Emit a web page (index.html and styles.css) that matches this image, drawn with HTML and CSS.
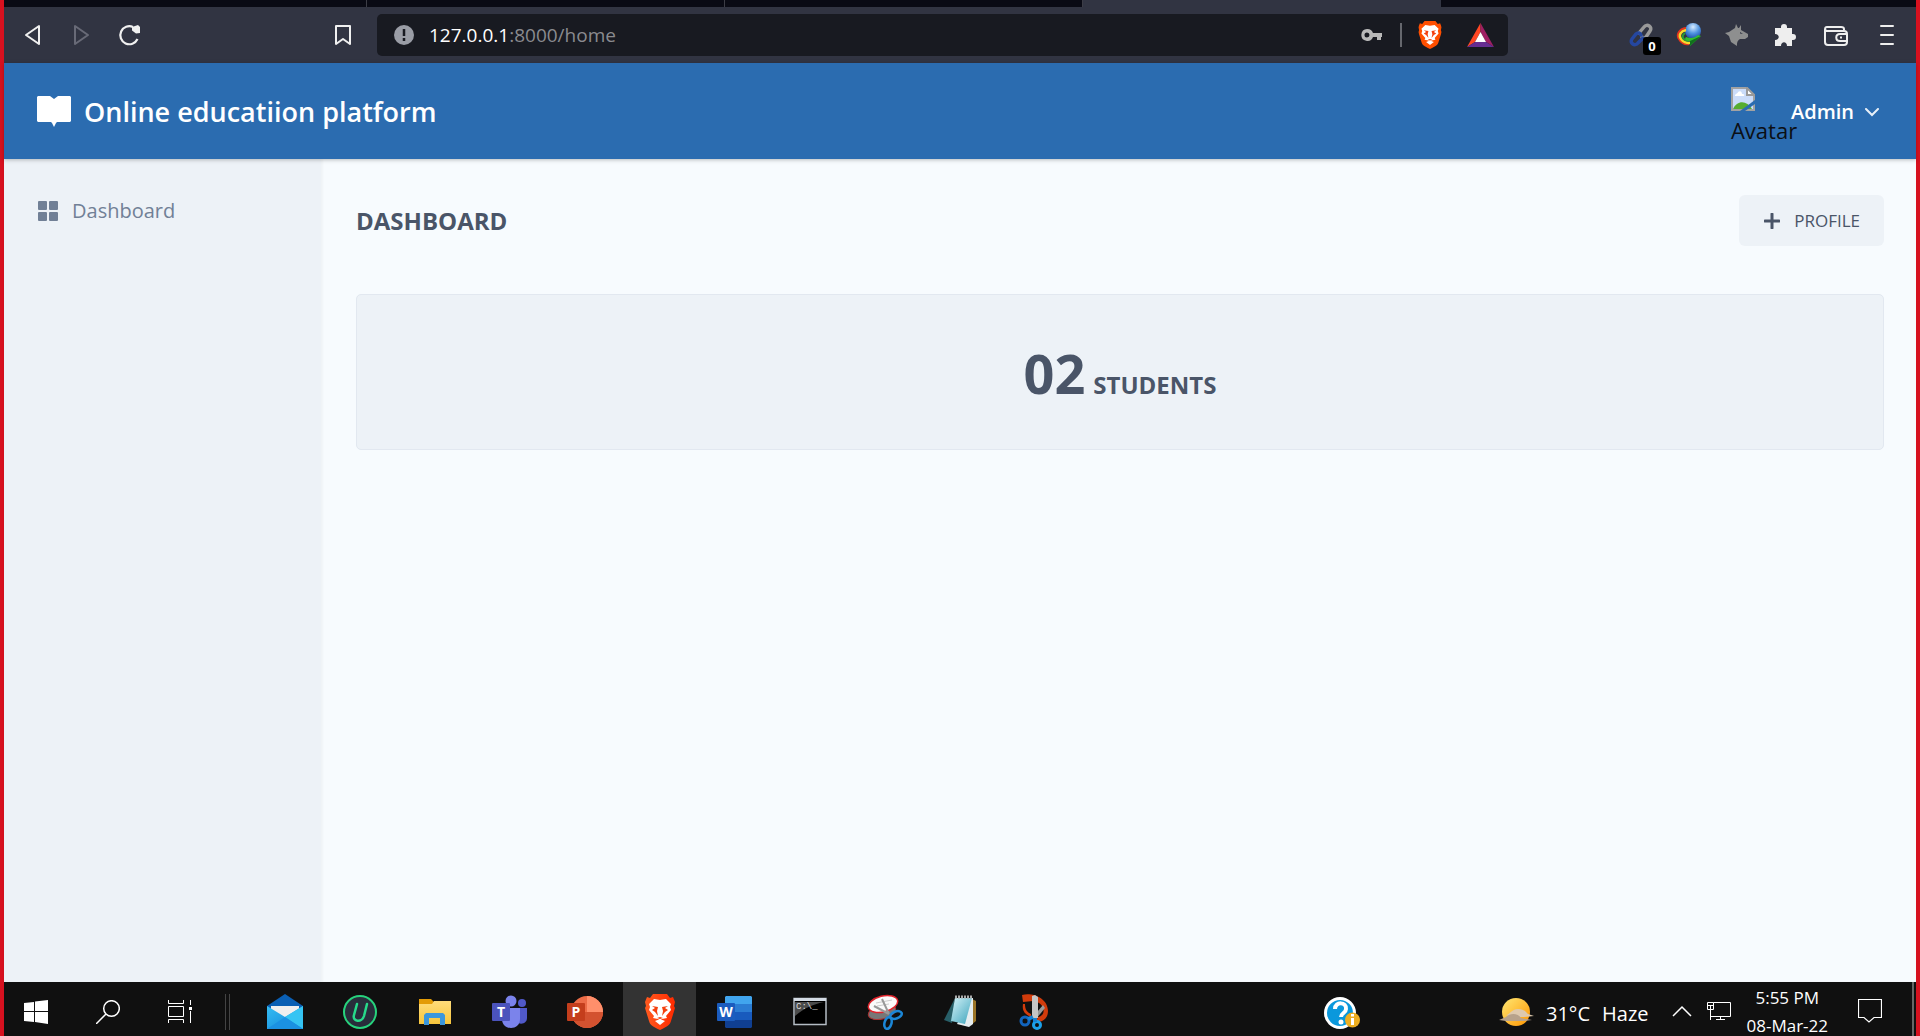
FILE: index.html
```html
<!DOCTYPE html>
<html lang="en">
<head>
<meta charset="utf-8">
<title>Online educatiion platform</title>
<meta name="viewport" content="width=device-width, initial-scale=1">
<link rel="stylesheet" href="styles.css">
</head>
<body>
<svg class="defs" aria-hidden="true">
  <defs>
    <linearGradient id="gBrave" x1="0" x2="1"><stop offset="0" stop-color="#ff5a1f"/><stop offset="1" stop-color="#ff2a00"/></linearGradient>
    <linearGradient id="gMail" x1="0" y1="0" x2="1" y2="1"><stop offset="0" stop-color="#35bdf3"/><stop offset="1" stop-color="#1184d8"/></linearGradient>
    <linearGradient id="gSun" x1="0" y1="0" x2="1" y2="1"><stop offset="0" stop-color="#ffe873"/><stop offset="1" stop-color="#ff9500"/></linearGradient>
    <linearGradient id="gFolder" x1="0" y1="0" x2="0" y2="1"><stop offset="0" stop-color="#ffdc7a"/><stop offset="1" stop-color="#f8c63c"/></linearGradient>
    <linearGradient id="gPad" x1="0" y1="0" x2="1" y2="1"><stop offset="0" stop-color="#d5f2f8"/><stop offset="1" stop-color="#3aa3bb"/></linearGradient>
    <radialGradient id="gGlobe" cx=".5" cy=".25" r=".8"><stop offset="0" stop-color="#d8ecff"/><stop offset=".5" stop-color="#4f94e0"/><stop offset="1" stop-color="#173f9c"/></radialGradient>
    <symbol id="lion" viewBox="0 0 30 36">
      <path d="M8 0h14l3 4 3-1 2 5-1 4 1 2-4 13c-1 4-3 5-11 9-8-4-10-5-11-9L0 14l1-2-1-4 2-5 3 1z"/>
      <path fill="#fff" d="M15 6l6-1 5 5-1 3 1 3-5 6 1 2-5 1-2 2-2-2-5-1 1-2-5-6 1-3-1-3 5-5zM10 27l5-2 5 2-5 4z"/>
      <path fill="#f4400f" d="M7 12l6 1-1 4 1 5-3-4-3-2 3-2zM23 12l-6 1 1 4-1 5 3-4 3-2-3-2zM12 24l3-1 3 1-3 1z"/>
    </symbol>
  </defs>
</svg>
<div class="screen">
  <div class="tabs"><span class="tab"></span><span class="tab"></span><span class="tab"></span><span class="tab tab-active"></span></div>

  <div class="toolbar">
    <div class="nav">
      <button class="icon-btn" aria-label="Back"><svg width="24" height="24" viewBox="0 0 24 24"><path d="M18 3v18L5 12z" fill="none" stroke="#f0f0f0" stroke-width="2" stroke-linejoin="round"/></svg></button>
      <button class="icon-btn" aria-label="Forward"><svg width="24" height="24" viewBox="0 0 24 24"><path d="M6 3v18l13-9z" fill="none" stroke="#686a77" stroke-width="2" stroke-linejoin="round"/></svg></button>
      <button class="icon-btn" aria-label="Reload"><svg width="24" height="24" viewBox="0 0 24 24"><path d="M16 4a9 9 0 1 0 4.500 12" fill="none" stroke="#f0f0f0" stroke-width="2.200"/><path d="M15 4l6-2 2 2v6l-4 .500-4-3z" fill="#f0f0f0"/></svg></button>
    </div>
    <button class="icon-btn" aria-label="Bookmark"><svg width="24" height="24" viewBox="0 0 24 24"><path d="M5 3h14v18l-7-5-7 5z" fill="none" stroke="#f0f0f0" stroke-width="2" stroke-linejoin="round"/></svg></button>
    <div class="address">
      <svg width="20" height="20" viewBox="0 0 20 20"><circle cx="10" cy="10" r="10" fill="#9a9da6"/><path d="M10 4v7M10 13v3" stroke="#181a21" stroke-width="2.500"/></svg>
      <span class="url">127.0.0.1<span class="url-dim">:8000/home</span></span>
      <svg width="22" height="14" viewBox="0 0 22 14"><path fill="#b9b9b9" fill-rule="evenodd" d="M6 1a6 6 0 0 1 6 4h9v4h-1v3h-4V9h-4A6 6 0 1 1 6 1zm0 3.500a2.500 2.500 0 1 0 0 5 2.500 2.500 0 0 0 0-5z"/></svg>
      <span class="address-rule"></span>
      <svg width="24" height="28" viewBox="0 0 30 36" fill="#ff4f00"><use href="#lion"/></svg>
      <svg class="bat" width="27" height="24" viewBox="0 0 27 24"><path d="M13.500 0L0 24l8-5 5.500-10z" fill="#ff4724"/><path d="M13.500 0L27 24l-8-5-5.500-10z" fill="#9e1f63"/><path d="M0 24h27l-8-5H8z" fill="#662d91"/><path d="M13.500 9L19 19H8z" fill="#fff"/></svg>
    </div>
    <div class="extensions">
      <button class="icon-btn ext-link" aria-label="Links"><svg width="24" height="24" viewBox="0 0 24 24" fill="none" stroke-width="3.500" stroke-linecap="round"><path d="M10 10l5-6c3-4 9 0 6 4l-4 6c-1 1-3 1-4 0" stroke="#999"/><path d="M14 15l-5 5c-3 4-9 0-6-4l4-5c2-2 4-1 5 1" stroke="#2547a0"/></svg><span class="badge">0</span></button>
      <button class="icon-btn" aria-label="Download manager"><svg width="26" height="24" viewBox="0 0 26 24"><circle cx="17" cy="8" r="8" fill="url(#gGlobe)"/><path d="M10 5C3 6 0 12 3 16c2 4 6 6 10 5" fill="none" stroke="#e6351d" stroke-width="2"/><path d="M10 7c-5 1-8 5-5 9s6 4 9 4" fill="none" stroke="#f8d92c" stroke-width="2.500"/><path d="M9 10c-4 3-3 7 4 8" fill="none" stroke="#2a9c35" stroke-width="2"/><path d="M10 14c5 2 9 1 12-2l3 1-11 10v-5c-4 0-6-2-4-4z" fill="#32bd30"/><path d="M14 18l11-5-11 10z" fill="#11701d"/></svg></button>
      <button class="icon-btn" aria-label="Wolf extension"><svg width="24" height="24" viewBox="0 0 24 24"><path fill="#8e8f8f" d="M10 5l1-4 2 4h1l2-3v5l7 4v3l-3 2h-5c-3 2-3 4-3 7l-6-4-2-6-4-3 4-1z"/><path fill="#313442" d="M15 9l3 2-3-.500z"/></svg></button>
      <button class="icon-btn" aria-label="Extensions"><svg width="24" height="24" viewBox="0 0 24 24"><path fill="#eee" d="M2 5h6V4a3 3 0 0 1 6 0v1h5v6h1a3 3 0 0 1 0 6h-1v6h-5c0-5-6-5-6 0H2v-6c5 0 5-6 0-6z"/></svg></button>
      <button class="icon-btn icon-btn-wide" aria-label="Wallet"><svg width="26" height="24" viewBox="0 0 26 24" fill="none" stroke="#eee" stroke-width="2"><path d="M21 7V6c0-1-1-2-3-2H4C1 4 2 8 4 8h17c2 0 3 1 3 3v8c0 2-1 3-3 3H5c-2 0-3-1-3-3V6M24 11h-7c-5 0-5 7 0 7h7M17 14.500h2"/></svg></button>
      <button class="icon-btn" aria-label="Menu"><svg width="24" height="24" viewBox="0 0 24 24"><path d="M6 3h12M6 12h12M6 21h12" stroke="#eee" stroke-width="2" stroke-linecap="round"/></svg></button>
    </div>
  </div>

  <header class="header">
    <a class="brand" href="#"><svg width="34" height="32" viewBox="0 0 34 32"><path fill="#fff" d="M1 1h12l4 3 4-3h12l1 1v24l-1 1H20l-1 1-2 4-2-4-1-1H1l-1-1V2z"/></svg><span>Online educatiion platform</span></a>
    <button class="account">
      <span class="avatar"><svg width="24" height="24" viewBox="0 0 24 24"><path d="M1 1h15l7 7v15H1z" fill="#cbdcf9" stroke="#a2a2a2" stroke-width="2"/><path d="M2 22c4-9 14-9 19 0z" fill="#57ad2f"/><path d="M4 9c0-3 3-2 3-4 3-2 4 1 4 2 3 0 3 2 1 2z" fill="#fff"/><path d="M16 1v7h7z" fill="#fff" stroke="#999" stroke-width="2"/><path d="M24 13v4l-10 7H9z" fill="#2b6cb0"/></svg><span>Avatar</span></span>
      <span class="account-name">Admin</span>
      <svg width="14" height="9" viewBox="0 0 14 9"><path d="M1 1l6 6 6-6" fill="none" stroke="#e8f0f8" stroke-width="2" stroke-linecap="round"/></svg>
    </button>
  </header>

  <div class="body">
    <nav class="sidebar">
      <a class="side-link" href="#"><svg width="20" height="20" viewBox="0 0 20 20" fill="#718096"><rect width="9" height="9" rx="1"/><rect x="11" width="9" height="9" rx="1"/><rect y="11" width="9" height="9" rx="1"/><rect x="11" y="11" width="9" height="9" rx="1"/></svg>Dashboard</a>
    </nav>
    <main class="content">
      <div class="content-head">
        <h1>DASHBOARD</h1>
        <a class="profile" href="#"><svg width="16" height="16" viewBox="0 0 16 16"><path d="M8 1v14M1 8h14" stroke="#4a5568" stroke-width="3" stroke-linecap="round"/></svg>PROFILE</a>
      </div>
      <section class="stat"><span class="stat-value">02</span><span class="stat-label">STUDENTS</span></section>
    </main>
  </div>

  <footer class="taskbar">
    <div class="system">
      <button class="sys-btn" aria-label="Start"><svg width="24" height="24" viewBox="0 0 24 24"><path fill="#fff" d="M0 3l10-1v9H0zM11 1.500L24 0v11H11zM0 12h10v10L0 21zM11 12h13v12l-13-2z"/></svg></button>
      <button class="sys-btn" aria-label="Search"><svg width="24" height="24" viewBox="0 0 24 24" fill="none" stroke="#fff" stroke-width="1.500"><circle cx="15.500" cy="8.500" r="7.800"/><path d="M10 14L0 24"/></svg></button>
      <button class="sys-btn" aria-label="Task view"><svg width="24" height="24" viewBox="0 0 24 24" fill="none" stroke="#fff"><path d="M.500 0v3.500h15V0M.500 6.500h15v10H.500zM.500 23v-3.500h15V23M22.500 0v5M22.500 11v12"/><path d="M21 7h3v3h-3z" fill="#fff" stroke="none"/></svg></button>
    </div>
    <span class="divider"></span>
    <div class="apps">
      <button class="app" aria-label="Mail"><svg width="36" height="36" viewBox="0 0 36 36"><path d="M0 12L18 0l18 12v8H0z" fill="#0a5fb4"/><path d="M4 12h28v12H4z" fill="#f0efef"/><path d="M0 12l18 11 18-11v23H0z" fill="url(#gMail)"/><path d="M36 12v23L18 23z" fill="#35c4f3"/><path d="M0 35l18-12 18 12z" fill="#1b91e2"/></svg></button>
      <button class="app" aria-label="Uninstaller"><svg width="36" height="36" viewBox="0 0 36 36"><circle cx="18" cy="18" r="16" fill="#282d3b" stroke="#27d27c" stroke-width="2"/><path d="M15 10l-3 11c-2 7 8 8 10 1l3-12" fill="none" stroke="#27d98a" stroke-width="2.500" stroke-linecap="round"/></svg></button>
      <button class="app" aria-label="Files"><svg width="36" height="36" viewBox="0 0 36 36"><path d="M2 5h12l3 3h17v8H2z" fill="#e39b06"/><path d="M2 10h13l2-3h17v23H2z" fill="url(#gFolder)"/><path d="M7 31V21l2-2h17l2 2v10h-5v-7H12v7z" fill="#3c97dc"/></svg></button>
      <button class="app" aria-label="Teams"><svg width="36" height="36" viewBox="0 0 36 36"><circle cx="30" cy="9" r="4" fill="#5059c9"/><path d="M25 14h10v10c0 4-4 7-9 5z" fill="#5059c9"/><circle cx="19" cy="7" r="5.500" fill="#7b83eb"/><path d="M10 14h18v11c0 12-18 12-18 0z" fill="#7b83eb"/><rect y="9" width="18" height="18" rx="1" fill="#4b53bc"/><text x="9" y="23" text-anchor="middle" class="glyph">T</text></svg></button>
      <button class="app" aria-label="PowerPoint"><svg width="36" height="36" viewBox="0 0 36 36"><circle cx="20" cy="18" r="16" fill="#ed6c47"/><path d="M20 2a16 16 0 0 1 16 16H20z" fill="#ff8f6b"/><path d="M4 18h32a16 16 0 0 1-32 0z" fill="#d35230"/><rect y="9" width="18" height="18" rx="1" fill="#c43e1c"/><text x="9" y="23" text-anchor="middle" class="glyph">P</text></svg></button>
      <button class="app app-active" aria-label="Brave"><svg width="30" height="36" viewBox="0 0 30 36" fill="url(#gBrave)"><use href="#lion"/></svg></button>
      <button class="app" aria-label="Word"><svg width="36" height="36" viewBox="0 0 36 36"><path d="M9 2h25l1 1v7H8V3z" fill="#41a5ee"/><path d="M8 10h27v8H8z" fill="#2b7cd3"/><path d="M8 18h27v8H8z" fill="#185abd"/><path d="M8 26h27v7l-1 1H9l-1-1z" fill="#103f91"/><rect y="9" width="18" height="18" rx="1" fill="#1b5cbe"/><text x="9" y="23" text-anchor="middle" class="glyph">W</text></svg></button>
      <button class="app" aria-label="Command prompt"><svg width="36" height="36" viewBox="0 0 36 36"><rect x="2" y="4.500" width="32" height="26" fill="#000" stroke="#b4bcc4" stroke-width="1.500"/><path d="M2 4h32v3H2z" fill="#d4dbe4"/><path d="M3 8h29C22 10 12 14 3 22z" fill="#4b4b4b"/><text x="4" y="15" class="prompt">C:\_</text></svg></button>
      <button class="app" aria-label="Snipping Tool"><svg width="36" height="36" viewBox="0 0 36 36"><ellipse cx="15" cy="18" rx="14" ry="7" fill="#777" stroke="#a33" transform="rotate(-14 15 18)"/><ellipse cx="16" cy="10" rx="15" ry="8" fill="#fafafa" stroke="#e0232b" stroke-width="1.500" transform="rotate(-14 16 10)"/><path d="M9 9l16-3M10 12l12-2" stroke="#ccc"/><path d="M15 5l7 15M7 12l15 8" stroke="#999" stroke-width="2"/><ellipse cx="29" cy="21" rx="6" ry="3.500" fill="none" stroke="#1b86d6" stroke-width="2.500" transform="rotate(-20 29 21)"/><ellipse cx="21" cy="29" rx="3.500" ry="6" fill="none" stroke="#1b86d6" stroke-width="2.500" transform="rotate(15 21 29)"/></svg></button>
      <button class="app" aria-label="Notepad"><svg width="36" height="36" viewBox="0 0 36 36"><path d="M30 5l4 2v20l-5 4z" fill="#9a7427"/><path d="M28 4h3v26l-4 3-12-3z" fill="#e5edf0"/><path d="M13 4L2 26l8 3z" fill="#285f68"/><path d="M13 4h17l-7 26-14-3z" fill="url(#gPad)"/><path d="M13 3h18" stroke="#aaa" stroke-width="3" stroke-dasharray="2 1"/></svg></button>
      <button class="app" aria-label="Snip and Sketch"><svg width="36" height="36" viewBox="0 0 36 36"><path d="M5 1c10-3 26 3 26 16 0 8-6 12-12 10l2-4c9-1 7-15-5-16L6 8zM8 10c0 6 2 8 6 10v3C7 20 5 16 6 10z" fill="#d13b0b"/><path d="M26 11l-11 13 4 1 9-11z" fill="#999"/><path d="M15 2l3-1 3 2v21h-6z" fill="#c5c5c5"/><circle cx="8" cy="27" r="4" fill="none" stroke="#1264bd" stroke-width="3"/><circle cx="20" cy="31" r="3.500" fill="none" stroke="#1ba0e8" stroke-width="3"/><path d="M11 25l5-2M18 24v4" stroke="#1582d5" stroke-width="4"/></svg></button>
    </div>
    <div class="tray">
      <button class="help" aria-label="Help"><svg width="36" height="34" viewBox="0 0 36 34"><circle cx="16" cy="16" r="14.500" fill="#0a98dc" stroke="#fff" stroke-width="3"/><path d="M11 12c0-8 12-7 11 0 0 4-5 4-5 8" fill="none" stroke="#fff" stroke-width="4"/><circle cx="17" cy="25" r="2.500" fill="#fff"/><circle cx="28.500" cy="23" r="7.500" fill="#edae21"/><path d="M28.500 21v7M28.500 17v2.500" stroke="#fff" stroke-width="3"/></svg></button>
      <button class="weather"><svg width="36" height="30" viewBox="0 0 36 30"><circle cx="18" cy="15" r="14" fill="url(#gSun)"/><path d="M8 18c4 0 5-6 12-6 6 0 8 3 10 5l6 2-10 1H14z" fill="#dec9ad"/><path d="M1 23l7-3c4-4 12-4 15 1l11 2-8 1H8z" fill="#b7a28b"/></svg><span class="weather-text">31°C</span><span class="weather-text">Haze</span></button>
      <button class="sys-icon" aria-label="Show hidden icons"><svg width="20" height="12" viewBox="0 0 20 12"><path d="M1 11l9-9 9 9" fill="none" stroke="#fff" stroke-width="1.500"/></svg></button>
      <button class="sys-icon" aria-label="Network"><svg width="26" height="20" viewBox="0 0 26 20" fill="none" stroke="#fff" stroke-width="1"><path d="M7.500 1.500h17v14h-20v-6M14.500 15.500v3M10 18.500h9M1.500 1.500h6v7h-6zM1 4.500h7M4.500 4v15"/></svg></button>
      <div class="clock"><span>5:55 PM</span><span>08-Mar-22</span></div>
      <button class="sys-icon" aria-label="Notifications"><svg width="24" height="24" viewBox="0 0 24 24"><path d="M.500.500h23v18H16l-5 4.500-5-4.500H.500z" fill="none" stroke="#fff" stroke-width="1.200"/></svg></button>
      <span class="show-desktop"></span>
    </div>
  </footer>
</div>
</body>
</html>
```
FILE: styles.css
```css
* { box-sizing: border-box; }
body { margin: 0; font-family: "Open Sans", "Noto Sans", sans-serif; }
button { border: 0; padding: 0; background: none; font: inherit; color: inherit; }
a { color: inherit; text-decoration: none; }
svg { display: block; flex: none; }
.defs { position: absolute; width: 0; height: 0; }
.screen { display: flex; flex-direction: column; min-height: 100vh; border: solid #d7111f; border-width: 0 4px; }

.tabs { display: flex; height: 7px; background: #090a14; }
.tab { width: 358px; border-right: 1px solid #3c3d46; }
.tab:first-child { width: 363px; }
.tab-active { background: #313442; border: 0; }

.toolbar { display: flex; align-items: center; height: 56px; padding: 0 17px; background: #313442; }
.icon-btn { position: relative; display: flex; align-items: center; justify-content: center; width: 24px; height: 24px; }
.icon-btn-wide { width: 30px; }
.nav { display: flex; gap: 24px; margin-right: 190px; }
.nav + .icon-btn { margin-right: 22px; }
.address { display: flex; align-items: center; flex: 1; height: 42px; margin-right: 121px; padding: 0 14px 0 17px; border-radius: 5px; background: #181a21; }
.url { flex: 1; margin-left: 15px; font-size: 19px; line-height: 28px; color: #fff; }
.url-dim { color: #8a8b8f; }
.address-rule { width: 2px; height: 24px; margin: 0 16px 0 17px; background: #66686e; }
.bat { margin-left: 25px; }
.extensions { display: flex; gap: 24px; }
.badge { position: absolute; left: 14px; top: 14px; width: 18px; height: 18px; border-radius: 3px; background: #000; color: #fff; font-size: 13px; font-weight: 700; line-height: 19px; text-align: center; }

.header { position: relative; display: flex; align-items: center; justify-content: space-between; height: 96px; padding: 0 37px 0 33px; background: #2b6cb0; box-shadow: 0 1px 4px rgba(0, 0, 0, .25); }
.brand { display: flex; align-items: center; gap: 13px; color: #fff; font-size: 27px; font-weight: 600; line-height: 36px; }
.brand span { padding-top: 2px; }
.account { display: flex; align-items: center; padding-top: 2px; color: #fff; }
.avatar { display: flex; flex-direction: column; width: 60px; height: 50px; color: #0b0f14; font-size: 22px; line-height: 38px; white-space: nowrap; text-align: left; }
.avatar span { height: 26px; }
.account-name { margin-right: 11px; font-size: 20px; font-weight: 600; line-height: 28px; }

.body { display: flex; flex: 1; background: #f7fafc; }
.sidebar { width: 317px; padding: 38px 34px; background: #edf2f7; box-shadow: 1px 0 3px rgba(0, 0, 0, .12); }
.side-link { display: flex; align-items: center; gap: 14px; color: #718096; font-size: 20px; line-height: 28px; }
.content { flex: 1; padding: 36px 32px 36px 35px; background: #f7fbfe; box-shadow: inset 2px 0 2px rgba(0, 0, 0, .03); }
.content-head { display: flex; align-items: center; justify-content: space-between; margin-bottom: 48px; }
h1 { margin: 0; color: #4a5568; font-size: 24px; font-weight: 700; line-height: 32px; }
.profile { display: flex; align-items: center; gap: 14px; height: 51px; padding: 0 24px 0 25px; border-radius: 6px; background: #edf2f7; color: #4a5568; font-size: 17px; }
.stat { display: flex; align-items: baseline; justify-content: center; gap: 8px; padding: 42px 24px 40px; border: 1px solid #e2e8f0; border-radius: 5px; background: #edf2f7; color: #4a5568; font-weight: 700; line-height: 72px; }
.stat-value { font-size: 54px; }
.stat-label { font-size: 24px; line-height: 24px; }

.taskbar { display: flex; align-items: center; height: 54px; background: #101010; color: #fff; }
.system { display: flex; gap: 40px; padding: 5px 0 0 16px; }
.sys-btn { display: flex; justify-content: center; width: 32px; }
.divider { width: 5px; height: 36px; margin: 6px 18px 0 29px; border: solid #444; border-width: 0 1px; }
.apps { display: flex; gap: 2px; }
.app { display: flex; align-items: center; justify-content: center; width: 73px; height: 54px; padding-top: 6px; }
.app-active { background: #333; }
.glyph { fill: #fff; font-size: 14px; font-weight: 700; }
.prompt { fill: #ddd; font: 9px "Liberation Mono", monospace; }
.tray { display: flex; align-items: center; height: 54px; margin-left: auto; font-size: 20px; }
.help { margin: 10px 138px 0 0; }
.weather { display: flex; align-items: center; gap: 12px; margin-right: 24px; padding-top: 6px; line-height: 28px; }
.weather-text { padding-top: 4px; }
.sys-icon { margin-right: 14px; padding-top: 4px; }
.clock { display: flex; flex-direction: column; align-items: center; height: 54px; margin-right: 30px; font-size: 17px; line-height: 28px; padding-top: 2px; }
.show-desktop { width: 2px; height: 54px; margin-right: 2px; margin-left: 16px; background: #666; }
```
